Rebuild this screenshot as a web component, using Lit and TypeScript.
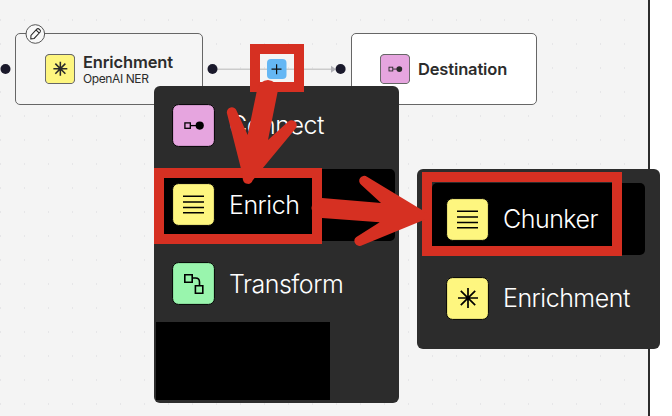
import { LitElement, html, css, svg } from "lit";
import { customElement, property } from "lit/decorators.js";

const glyphs: Record<string, unknown> = {
  connect: svg`<rect x="12.9" y="18.9" width="5.4" height="5.4" fill="none" stroke-width="1.3"/><path d="M18.5 21.6H25" stroke-width="1.3"/><circle cx="27.7" cy="21.6" r="4.1" fill="currentColor" stroke="none"/>`,
  lines: svg`<path d="M11 13.3H32M11 19H32M11 24.4H32M11 29.8H32" stroke-width="1.5"/>`,
  transform: svg`<path d="M12.8 12.8h7.4v7.4h-7.4zM23.4 23.8h7.4v7.4h-7.4zM21 16h2.5q4 0 4 4v3.5" fill="none" stroke-width="1.6"/>`,
  star: svg`<path d="M12 21H32M22 11V31M14.8 13.8L29.2 28.2M29.2 13.8L14.8 28.2" stroke-width="1.7"/>`,
};

@customElement("step-icon")
class StepIcon extends LitElement {
  @property() kind = "star";
  @property({ type: Number }) size = 43;
  static styles = css`
    :host { display: block; flex: none; color: #000; }
    :host([soft]) { color: #2a2a2a; }
    svg { display: block; }
    .box { stroke: #000; stroke-width: 1; }
    :host([soft]) .box { stroke: #666; stroke-width: 1.5; }
    :host([soft][kind="star"]) path { stroke-width: 2.2; }
    .star, .lines { fill: #fef67f; }
    .connect { fill: #e6a5df; }
    .transform { fill: #99f5ad; }
  `;
  render() {
    return html`<svg width=${this.size} height=${this.size} viewBox="0 0 43 43">
      <rect class="box ${this.kind}" x="0.6" y="0.6" width="41.8" height="41.8" rx="6"/>
      <g stroke="currentColor">${glyphs[this.kind]}</g>
    </svg>`;
  }
}

@customElement("menu-item")
class MenuItem extends LitElement {
  @property() kind = "";
  @property() label = "";
  static styles = css`
    :host {
      display: flex; align-items: flex-start; gap: 14px; height: 72px;
      box-sizing: border-box; padding: var(--item-top, 14px) 0 0 14px; border-radius: 5px;
      color: #fff; font: 350 25px/43px Inter, sans-serif;
    }
    :host([active]) { background: #000; }
    .label { white-space: nowrap; letter-spacing: -0.5px; line-height: var(--label-line, 43px); }
  `;
  render() {
    return html`<step-icon kind=${this.kind}></step-icon><span class="label">${this.label}</span>`;
  }
}

@customElement("app-root")
class AppRoot extends LitElement {
  static styles = css`
    :host { display: block; position: relative; width: 672px; height: 416px; overflow: hidden; background: #fff; font-family: Inter, sans-serif; }
    .canvas {
      box-sizing: border-box; width: 650px; height: 416px; border-right: 2px solid #2c2c2c;
      background: radial-gradient(circle at 12.5px 12px, #e6e6e8 0.7px, transparent 1.1px) 12px 8px / 24px 24px #f4f4f4;
    }
    .node {
      position: absolute; top: 33px; box-sizing: border-box; width: 188px; height: 72px;
      border: 1px solid #666; border-radius: 5px; padding-left: 29px;
      display: flex; align-items: center; gap: 8px; color: #2c2c2c;
    }
    .source { left: 15px; background: #f5f5f5; }
    .target { left: 351px; width: 186px; padding-left: 28px; background: #fff; }
    .title { font-size: 16.5px; line-height: 20px; font-weight: 600; letter-spacing: -0.15px; }
    .source .title { margin-top: -2px; }
    .sub { font-size: 12px; line-height: 13px; letter-spacing: -0.4px; }
    .layer { position: absolute; left: 0; top: 0; display: block; }
    .menu { position: absolute; box-sizing: border-box; background: #2c2c2c; border-radius: 6px; }
    .main { left: 154px; top: 86px; width: 245px; height: 317px; padding: 4px 4px 0; display: flex; flex-direction: column; gap: 7px; }
    .main menu-item + menu-item { --label-line: 45px; }
    .subm { --item-top: 15px; left: 417px; top: 169px; width: 243px; height: 180px; padding: 14px 15px 0; display: flex; flex-direction: column; gap: 7px; }
    .redacted { width: 174px; height: 78px; background: #000; margin: -5px 0 0 -2px; }
  `;
  render() {
    return html`
      <div class="canvas"></div>
      <div class="node source">
        <step-icon soft kind="star" size="30"></step-icon>
        <div><div class="title">Enrichment</div><div class="sub">OpenAI NER</div></div>
      </div>
      <div class="node target">
        <step-icon soft kind="connect" size="30"></step-icon>
        <div class="title">Destination</div>
      </div>
      <svg class="layer" width="672" height="416">
        <path d="M217 69.3H333" stroke="#cbcbcb" stroke-width="1.6"/>
        <path d="M331 65.8L336 69.3L331 72.8Z" fill="#b1b1b7"/>
        <g fill="#1a192b"><circle cx="5.5" cy="69" r="5"/><circle cx="212.5" cy="69" r="5"/><circle cx="340.6" cy="69" r="5"/></g>
        <circle cx="35.3" cy="34" r="9.3" fill="#f8f8f8" stroke="#555"/>
        <g transform="translate(35.3 34) rotate(43)" fill="none" stroke="#222" stroke-width="1">
          <path d="M-2.2-4.8Q-2-6.2 0-6.2Q2-6.2 2.2-4.8V4L0 6.6L-2.2 4ZM-2-3.4H2"/>
        </g>
        <rect x="267" y="59" width="19.5" height="20" rx="4" fill="#65b7f4"/>
        <path d="M271.5 69.2H281.5M276.6 64.2V74.2" stroke="#111" stroke-width="1.2"/>
      </svg>
      <div class="menu main">
        <menu-item kind="connect" label="Connect"></menu-item>
        <menu-item active kind="lines" label="Enrich"></menu-item>
        <menu-item kind="transform" label="Transform"></menu-item>
        <div class="redacted"></div>
      </div>
      <div class="menu subm">
        <menu-item active kind="lines" label="Chunker"></menu-item>
        <menu-item kind="star" label="Enrichment"></menu-item>
      </div>
      <svg class="layer" width="672" height="416">
        <g fill="none" stroke="#d63022" stroke-width="10">
          <rect x="255" y="49" width="44" height="38"/>
          <rect x="159" y="173" width="158" height="66"/>
          <rect x="427" y="177" width="190" height="74"/>
        </g>
        <g fill="#d63022">
          <path d="M257 90Q260 80 268 80Q277 81 278 90L268 140L288.3 121.6A5 5 0 0 1 295.2 129L263.3 167.5L252.6 180.5A5 5 0 0 1 243 180L240.7 167.5L227 113.5A5 5 0 0 1 236.7 111L247.7 135Z"/>
          <path d="M322 198L381 203L361.4 185A5 5 0 0 1 367 176.7L422 210L429 215L422 220.7L361 245.7A5 5 0 0 1 356.4 237L379.7 222.3L322 218L313 212Q310 208 313 203Z"/>
        </g>
      </svg>
    `;
  }
}
